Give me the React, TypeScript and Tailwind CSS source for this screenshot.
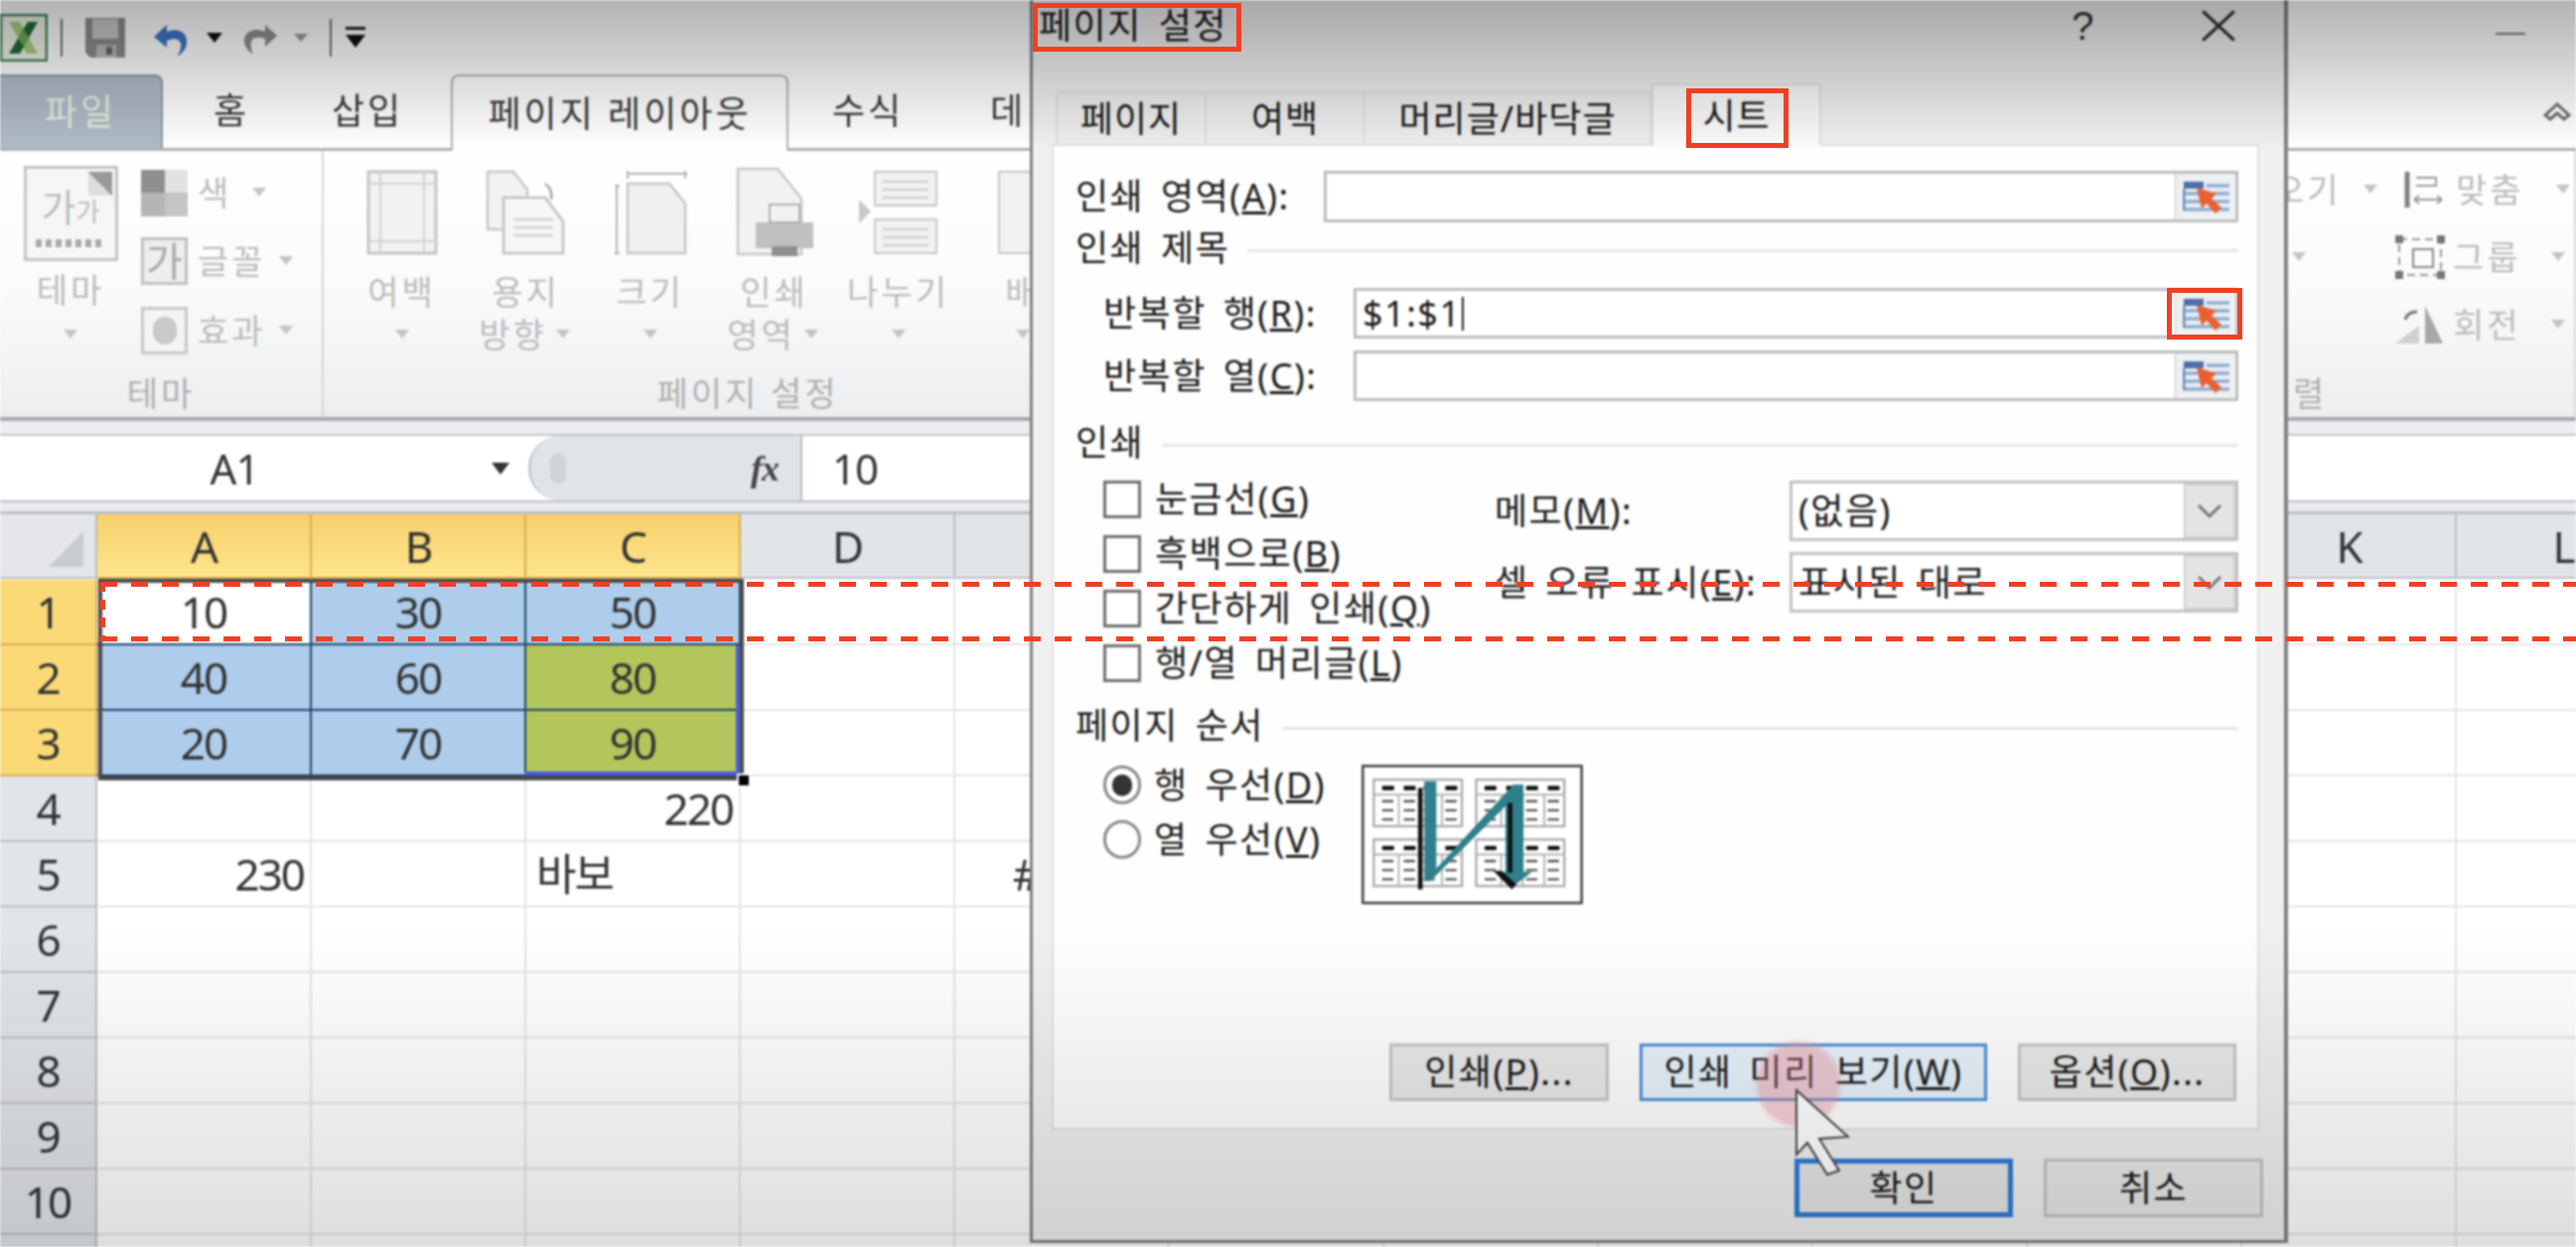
import React from "react";

const GRID_COLS = ["A", "B", "C", "D", "E", "F", "G", "H", "I", "J", "K", "L"];
const BLUE = "bg-[#aecdec]";
const GREEN = "bg-[#b3c65c]";

const Arrow = ({ className = "" }: { className?: string }) => (
  <svg width="20" height="12" viewBox="0 0 20 12" className={className}>
    <path d="M3 1h14l-7 9z" fill="#c4c4c4" />
  </svg>
);

const ExcelLogo = () => (
  <svg width="48" height="48" viewBox="0 0 48 48" className="ml-0 shrink-0">
    <rect x="1" y="1" width="46" height="46" fill="#eef3ea" stroke="#3d7d4c" strokeWidth="2.5" />
    <path d="M9 8h11l18 32H27z" fill="#a9cf7d" />
    <path d="M38 8H28L9 40h11z" fill="#1f6d36" />
    <path d="M18 24l6-8 5 8-5 9z" fill="#76a85f" />
  </svg>
);

const QuickAccess = () => (
  <div className="flex items-center h-[75px] shrink-0">
    <ExcelLogo />
    <div className="w-[2px] h-[38px] bg-[#707070] ml-[13px]" />
    <svg width="42" height="42" viewBox="0 0 42 42" className="ml-[22px]">
      <path d="M1 1h40v40H6l-5-5z" fill="#8c8c8c" />
      <rect x="8" y="2" width="26" height="20" fill="#c9c9c9" />
      <rect x="12" y="28" width="20" height="13" fill="#bbb" />
      <rect x="22" y="30" width="6" height="8" fill="#666" />
    </svg>
    <svg width="38" height="40" viewBox="0 0 38 40" className="ml-[26px]">
      <path d="M2 19l13-12v7c12-5 21 1 20 12-1 6-5 10-10 13 3-5 5-9 4-13-1-5-6-6-14-3v7z" fill="#3f75c9" />
    </svg>
    <svg width="18" height="12" viewBox="0 0 18 12" className="ml-[16px]">
      <path d="M1 1h16l-8 10z" fill="#111" />
    </svg>
    <svg width="38" height="38" viewBox="0 0 38 38" className="ml-[18px]">
      <path d="M36 17L24 6v7C12 8 3 13 3 22c0 6 4 10 9 14-2-5-3-9-2-13 2-5 7-5 14-3v8z" fill="#8f8f8f" />
    </svg>
    <svg width="16" height="10" viewBox="0 0 16 10" className="ml-[14px]">
      <path d="M1 1h14l-7 8z" fill="#9a9a9a" />
    </svg>
    <div className="w-[2px] h-[38px] bg-[#707070] ml-[21px]" />
    <svg width="22" height="24" viewBox="0 0 22 24" className="ml-[13px]">
      <rect x="1" y="1" width="20" height="3" fill="#222" />
      <path d="M1 9h20l-10 13z" fill="#111" />
    </svg>
  </div>
);

const MenuTabs = () => (
  <div className="flex items-stretch h-[77px] shrink-0 text-[36px] tracking-[3px] text-[#3b3b3b] border-b-[3px] border-[#b0b0b0]">
    <div className="w-[164px] flex items-center justify-center bg-[#b0bbc8] border-t-[2px] border-r-[2px] border-[#8d96a2] rounded-tr-[8px] text-[#e6efdc]">
      파일
    </div>
    <div className="w-[138px] flex items-center justify-center">홈</div>
    <div className="w-[136px] flex items-center justify-center">삽입</div>
    <div className="w-[16px]" />
    <div className="w-[340px] flex items-center justify-center bg-white border-[2px] border-b-0 border-[#b4b4b4] rounded-t-[8px] -mb-[3px] relative">
      페이지 레이아웃
    </div>
    <div className="w-[160px] flex items-center justify-center">수식</div>
    <div className="w-[122px] flex items-center justify-center">데</div>
    <div className="flex-1 flex justify-end items-center pr-[4px]">
      <svg width="30" height="24" viewBox="0 0 30 24">
        <path d="M3 16l12-11 12 11-5 4-7-6-7 6z" fill="none" stroke="#6e6e6e" strokeWidth="3" />
      </svg>
    </div>
  </div>
);

const RibbonButton = ({
  label,
  second,
  children,
}: {
  label: string;
  second?: string;
  children: React.ReactNode;
}) => (
  <div className="w-[125px] shrink-0 flex flex-col items-center leading-none">
    <div className="h-[86px] mt-[19px] flex items-center justify-center">{children}</div>
    <div className="h-[43px] mt-[15px] flex items-center justify-center whitespace-nowrap">{label}</div>
    <div className="h-[44px] flex items-center justify-center gap-[6px] whitespace-nowrap">
      {second}
      <Arrow />
    </div>
  </div>
);

const Ribbon = () => (
  <div className="flex h-[272px] shrink-0 bg-gradient-to-b from-white via-[#fbfbfb] to-[#eceef0] text-[34px] tracking-[3px] text-[#bcbcbc] border-b-[4px] border-[#a9a9a9]">
    {/* theme group */}
    <div className="w-[326px] shrink-0 border-r-[2px] border-[#d6d6d6] flex flex-col">
      <div className="flex h-[222px]">
        <div className="w-[142px] flex flex-col items-center">
          <div className="mt-[15px] w-[95px] h-[96px] border-[3px] border-[#c4c4c4] bg-[#f6f6f6] relative flex flex-col items-center justify-center text-[#bdbdbd]">
            <span className="text-[38px] tracking-[0px] leading-[52px]">가<span className="text-[26px]">가</span></span>
            <div className="w-[70px] h-[8px] mt-[2px] bg-[repeating-linear-gradient(90deg,#aaa_0,#aaa_6px,transparent_6px,transparent_10px)]" />
            <div className="absolute top-[3px] right-[3px] w-[24px] h-[24px] bg-[linear-gradient(45deg,#ddd_50%,#999_50%)]" />
          </div>
          <div className="h-[43px] mt-[8px] flex items-center">테마</div>
          <Arrow className="mt-[17px]" />
        </div>
        <div className="flex-1 flex flex-col pt-[19px] gap-[22px]">
          <div className="flex items-center h-[46px] gap-[10px]">
            <div className="w-[47px] h-[47px] grid grid-cols-2 grid-rows-2">
              <div className="bg-[#8f8f8f]" />
              <div className="bg-[#e2e2e2]" />
              <div className="bg-[#b5b5b5]" />
              <div className="bg-[#c4c4c4]" />
            </div>
            <span>색</span>
            <Arrow className="ml-[8px]" />
          </div>
          <div className="flex items-center h-[48px] gap-[10px]">
            <div className="w-[47px] h-[48px] border-[3px] border-[#c0c0c0] bg-[#eee] flex items-center justify-center text-[#aaa] text-[40px] tracking-normal">가</div>
            <span>글꼴</span>
            <Arrow />
          </div>
          <div className="flex items-center h-[48px] gap-[10px]">
            <div className="w-[47px] h-[48px] border-[3px] border-[#c8c8c8] bg-[#f4f4f4] flex items-center justify-center">
              <div className="w-[24px] h-[28px] rounded-full bg-[#c9c9c9]" />
            </div>
            <span>효과</span>
            <Arrow />
          </div>
        </div>
      </div>
      <div className="flex-1 flex items-start justify-center pt-[4px] text-[#b0b0b0] leading-[36px]">테마</div>
    </div>

    {/* page setup group */}
    <div className="w-[854px] shrink-0 flex flex-col">
      <div className="flex h-[222px] pl-[16px]">
        <RibbonButton label="여백">
          <svg width="72" height="86" viewBox="0 0 72 86">
            <rect x="2" y="2" width="68" height="82" fill="#f2f2f2" stroke="#c4c4c4" strokeWidth="3" />
            <path d="M14 2v82M58 2v82M2 14h68M2 72h68" stroke="#d2d2d2" strokeWidth="2" fill="none" />
          </svg>
        </RibbonButton>
        <RibbonButton label="용지" second="방향">
          <svg width="82" height="86" viewBox="0 0 82 86">
            <path d="M2 2h26l14 18v40H2z" fill="#f2f2f2" stroke="#c8c8c8" strokeWidth="2.5" />
            <path d="M18 28h42l18 24v32H18z" fill="#f6f6f6" stroke="#c2c2c2" strokeWidth="2.5" />
            <path d="M28 50h40M28 58h40M28 66h40" stroke="#d4d4d4" strokeWidth="2.5" />
            <path d="M60 14q8 6 6 16" stroke="#aaa" strokeWidth="2.5" fill="none" />
          </svg>
        </RibbonButton>
        <RibbonButton label="크기">
          <svg width="74" height="86" viewBox="0 0 74 86">
            <path d="M14 4h60M14 1v8M72 1v8M3 16v68M1 16h5M1 84h5" stroke="#b4b4b4" strokeWidth="2" fill="none" />
            <path d="M14 14h42l16 20v50H14z" fill="#f0f0f0" stroke="#c6c6c6" strokeWidth="2.5" />
          </svg>
        </RibbonButton>
        <RibbonButton label="인쇄" second="영역">
          <svg width="78" height="92" viewBox="0 0 78 92">
            <path d="M2 2h40l24 30v56H2z" fill="#f2f2f2" stroke="#c8c8c8" strokeWidth="2.5" />
            <rect x="20" y="56" width="58" height="26" fill="#c0c0c0" />
            <rect x="34" y="38" width="30" height="18" fill="#f2f2f2" stroke="#b0b0b0" strokeWidth="2" />
            <rect x="36" y="80" width="26" height="10" fill="#8f8f8f" />
          </svg>
        </RibbonButton>
        <RibbonButton label="나누기">
          <svg width="80" height="86" viewBox="0 0 80 86">
            <path d="M0 30l12 12-12 12z" fill="#c8c8c8" />
            <rect x="16" y="2" width="62" height="34" fill="#f2f2f2" stroke="#c8c8c8" strokeWidth="2" />
            <rect x="16" y="50" width="62" height="34" fill="#f2f2f2" stroke="#c8c8c8" strokeWidth="2" />
            <path d="M24 12h46M24 20h46M24 28h46M24 60h46M24 68h46M24 76h46" stroke="#d0d0d0" strokeWidth="2.5" />
          </svg>
        </RibbonButton>
        <RibbonButton label="배">
          <svg width="52" height="86" viewBox="0 0 52 86">
            <rect x="2" y="2" width="50" height="82" fill="#f2f2f2" stroke="#c8c8c8" strokeWidth="2" />
          </svg>
        </RibbonButton>
      </div>
      <div className="flex-1 flex items-start justify-center pt-[4px] text-[#b0b0b0] leading-[36px]">페이지 설정</div>
    </div>

    {/* arrange group, the part to the right of the dialog */}
    <div className="ml-auto w-[291px] shrink-0 flex flex-col border-r-[2px] border-[#d6d6d6]">
      <div className="h-[222px] pt-[19px] flex flex-col gap-[28px]">
        <div className="flex items-center h-[40px] whitespace-nowrap">
          <span className="w-[62px] -ml-[14px]">오기</span>
          <Arrow className="ml-[26px]" />
          <svg width="40" height="36" viewBox="0 0 40 36" className="ml-[24px]">
            <path d="M3 0v36" stroke="#808080" strokeWidth="5" />
            <path d="M12 6h20v8H12M10 28h28M10 28l5-4M10 28l5 4M38 28l-5-4M38 28l-5 4" stroke="#999" strokeWidth="2" fill="none" />
          </svg>
          <span className="ml-[12px] w-[92px]">맞춤</span>
          <Arrow className="ml-[6px]" />
        </div>
        <div className="flex items-center h-[40px] whitespace-nowrap">
          <Arrow className="ml-[2px]" />
          <svg width="50" height="44" viewBox="0 0 50 44" className="ml-[87px]">
            <path d="M4 4h42v36H4z" fill="none" stroke="#999" strokeWidth="2" strokeDasharray="8 5" />
            <rect x="18" y="14" width="20" height="18" fill="none" stroke="#888" strokeWidth="2" />
            <path d="M0 0h8v8H0zM42 0h8v8h-8zM0 36h8v8H0zM42 36h8v8h-8z" fill="#777" />
          </svg>
          <span className="ml-[8px] w-[92px]">그룹</span>
          <Arrow className="ml-[4px]" />
        </div>
        <div className="flex items-center h-[40px] pl-[109px] whitespace-nowrap">
          <svg width="48" height="38" viewBox="0 0 48 38">
            <path d="M0 38l24-18v18z" fill="#d0d0d0" />
            <path d="M30 0v38h18z" fill="#a8a8a8" />
            <path d="M10 14q2-8 12-8" stroke="#777" strokeWidth="3" fill="none" />
          </svg>
          <span className="ml-[10px] w-[92px]">회전</span>
          <Arrow className="ml-[4px]" />
        </div>
      </div>
      <div className="flex-1 pl-[6px] pt-[4px] text-[#b0b0b0] leading-[36px]">렬</div>
    </div>
  </div>
);

const FormulaBar = () => (
  <div className="flex flex-col shrink-0">
    <div className="h-[13px] bg-[#eceef1]" />
    <div className="h-[67px] flex bg-white text-[42px] tracking-[-1px] text-[#333] border-t-[2px] border-[#c4c4c4]">
      <div className="w-[472px] flex items-center justify-center">A1</div>
      <div className="w-[60px] flex items-center justify-start pl-[22px]">
        <svg width="20" height="14" viewBox="0 0 20 14">
          <path d="M1 1h18l-9 12z" fill="#333" />
        </svg>
      </div>
      <div className="w-[276px] flex items-center justify-between pl-[20px] pr-[22px] bg-[#e0e3e8] border-l-[2px] border-r-[2px] border-[#b9bcc1] rounded-l-[40px]">
        <div className="w-[16px] h-[30px] rounded-full bg-[#cfd2d7]" />
        <span className="font-['Liberation_Serif',serif] italic font-bold text-[36px] text-[#444]">fx</span>
      </div>
      <div className="flex-1 flex items-center pl-[30px]">10</div>
    </div>
    <div className="h-[14px] bg-[#e9ebee] border-b-[3px] border-t-[2px] border-[#bcbfc4]" />
  </div>
);

const cellData: Record<string, { text: string; bg?: string; align?: string }> = {
  A1: { text: "10", align: "justify-center" },
  B1: { text: "30", bg: BLUE, align: "justify-center" },
  C1: { text: "50", bg: BLUE, align: "justify-center" },
  A2: { text: "40", bg: BLUE, align: "justify-center" },
  B2: { text: "60", bg: BLUE, align: "justify-center" },
  C2: { text: "80", bg: GREEN, align: "justify-center" },
  A3: { text: "20", bg: BLUE, align: "justify-center" },
  B3: { text: "70", bg: BLUE, align: "justify-center" },
  C3: { text: "90", bg: GREEN, align: "justify-center" },
  C4: { text: "220", align: "justify-end pr-[6px]" },
  A5: { text: "230", align: "justify-end pr-[6px]" },
  C5: { text: "바보", align: "justify-start pl-[10px]" },
  E5: { text: "#N/A", align: "justify-center" },
};

const Grid = () => (
  <div className="relative flex-1 overflow-hidden text-[44px] tracking-[-2px] text-[#333]">
    <div className="grid grid-cols-[98px_repeat(12,216px)] auto-rows-[66px] -mb-[2px]">
      {/* column header */}
      <div className="h-[65px] bg-[#e4e6ea] border-r-[2px] border-b-[2px] border-[#b8bbc0] flex items-end justify-end pr-[12px] pb-[10px]">
        <div className="w-[36px] h-[36px] bg-[linear-gradient(135deg,transparent_50%,#c9ccd1_50%)]" />
      </div>
      {GRID_COLS.map((c, i) => (
        <div
          key={c}
          className={
            i < 3
              ? "h-[65px] flex items-center justify-center bg-gradient-to-b from-[#f8d06b] to-[#fde58c] border-r-[2px] border-b-[2px] border-[#d6ae53]"
              : "h-[65px] flex items-center justify-center bg-[#e1e4e9] border-r-[2px] border-b-[2px] border-[#bcbfc4]"
          }
        >
          {c}
        </div>
      ))}
      {/* rows */}
      {[1, 2, 3, 4, 5, 6, 7, 8, 9, 10, 11].map((r) => (
        <React.Fragment key={r}>
          <div
            className={
              r < 4
                ? "flex items-center justify-center bg-[#fbd977] border-r-[2px] border-b-[2px] border-[#d6ae53]"
                : "flex items-center justify-center bg-[#e1e4e9] border-r-[2px] border-b-[2px] border-[#bcbfc4]"
            }
          >
            {r < 11 ? r : null}
          </div>
          {GRID_COLS.map((c) => {
            const cell = cellData[c + r];
            const inSelection = r < 4 && (c === "A" || c === "B" || c === "C");
            return (
              <div
                key={c + r}
                className={`flex items-center border-r-[2px] border-b-[2px] ${inSelection ? "border-[#1d4468]" : "border-[#e4e4e4]"} ${cell?.bg ?? ""} ${cell?.align ?? ""}`}
              >
                {cell?.text}
              </div>
            );
          })}
        </React.Fragment>
      ))}
    </div>
    {/* selection frame */}
    <div className="absolute left-[99px] top-[65px] w-[650px] h-[203px] border-[4px] border-[#4a4a4a] pointer-events-none" />
    <div className="absolute left-[528px] top-[259px] w-[217px] h-[4px] bg-[#4a5de0]" />
    <div className="absolute left-[741px] top-[132px] w-[4px] h-[130px] bg-[#4a5de0]" />
    <div className="absolute left-[742px] top-[261px] w-[14px] h-[14px] bg-black border-[2px] border-white" />
  </div>
);

const RefIcon = () => (
  <svg width="48" height="36" viewBox="0 0 48 36">
    <rect x="1" y="2" width="46" height="32" fill="#e6ecf5" />
    <rect x="1" y="3" width="20" height="7" fill="#4f6fa8" />
    <path d="M24 7h23M1 15h46M1 23h46M1 31h46" stroke="#8aa5cc" strokeWidth="3" />
    <path d="M1 10v22" stroke="#6f8cba" strokeWidth="3" />
    <path d="M14 9l20 6-5 5 10 9-6 6-9-10-5 5z" fill="#e8602f" />
  </svg>
);

const RefField = ({ value }: { value?: string }) => (
  <div className="flex flex-1 self-stretch border-[3px] border-[#bdbdbd] bg-white">
    <div className="flex-1 flex items-center pl-[6px]">
      {value}
      {value && <div className="w-[2px] h-[34px] bg-[#222]" />}
    </div>
    <div className="w-[62px] shrink-0 bg-[#eef0f2] border-l-[3px] border-[#e4e4e4] flex items-center justify-center">
      <RefIcon />
    </div>
  </div>
);

const Legend = ({ label, className = "" }: { label: string; className?: string }) => (
  <div className={`flex items-center h-[40px] gap-[18px] ${className}`}>
    <span>{label}</span>
    <div className="flex-1 h-[3px] bg-[#e6e6e6] mt-[4px]" />
  </div>
);

const Check = ({ children }: { children: React.ReactNode }) => (
  <div className="flex items-center h-[38px] gap-[14px]">
    <div className="w-[38px] h-[38px] border-[3px] border-[#6f6f6f] bg-white" />
    <span>{children}</span>
  </div>
);

const Combo = ({ value }: { value: string }) => (
  <div className="flex h-[61px] w-[452px] border-[3px] border-[#c2c2c2] bg-white">
    <div className="flex-1 flex items-center pl-[6px]">{value}</div>
    <div className="w-[52px] bg-[#e4e4e4] border-[2px] border-[#d0d0d0] flex items-center justify-center">
      <svg width="26" height="16" viewBox="0 0 26 16">
        <path d="M2 2l11 11L24 2" fill="none" stroke="#777" strokeWidth="3" />
      </svg>
    </div>
  </div>
);

const Radio = ({ on, children }: { on?: boolean; children: React.ReactNode }) => (
  <div className="flex items-center h-[39px] gap-[13px]">
    <div className="w-[38px] h-[39px] rounded-full border-[3px] border-[#8a8a8a] bg-white flex items-center justify-center">
      {on && <div className="w-[20px] h-[22px] rounded-full bg-[#333]" />}
    </div>
    <span>{children}</span>
  </div>
);

const PageOrderPreview = () => {
  const minis = [
    [70, 70],
    [378, 70],
    [70, 250],
    [378, 250],
  ];
  return (
    <svg width="223" height="141" viewBox="33 25 666 420" className="bg-white">
      <rect x="37" y="29" width="658" height="412" fill="#fff" stroke="#333" strokeWidth="7" />
      {minis.map(([x, y]) => (
        <g key={`${x}-${y}`}>
          <rect x={x} y={y} width="265" height="140" fill="#fff" stroke="#aaa" strokeWidth="7" />
          <path d={`M${x} ${y + 45}h265M${x + 75} ${y + 45}v95M${x + 140} ${y + 45}v95M${x + 205} ${y + 45}v95`} stroke="#aaa" strokeWidth="5" />
          {[25, 90, 150, 215].map((dx) => (
            <rect key={dx} x={x + dx} y={y + 19} width="36" height="13" rx="3" fill="#111" />
          ))}
          {[25, 90, 150, 215].map((dx) => (
            <path key={dx} d={`M${x + dx} ${y + 65}h34M${x + dx} ${y + 92}h34M${x + dx} ${y + 120}h34`} stroke="#555" strokeWidth="7" />
          ))}
        </g>
      ))}
      <path d="M210 95v305" stroke="#111" strokeWidth="14" />
      <path d="M222 75h36v262L490 85h30v262h26l-56 44-50-44h26V150L240 375h-18z" fill="#2f7f8c" />
      <path d="M480 140v210" stroke="#111" strokeWidth="14" />
      <path d="M430 345l55 55 14-15-45-40z" fill="#111" />
    </svg>
  );
};

const DialogButton = ({ children, variant }: { children: React.ReactNode; variant?: "hover" | "default" }) => {
  let cls = "border-[3px] border-[#c4c4c4] bg-[#e8e8e8]";
  if (variant === "hover") cls = "border-[3px] border-[#4a90d9] bg-[#e6f2fb]";
  if (variant === "default") cls = "border-[5px] border-[#2e7bd6] bg-[#e6e6e6]";
  return <div className={`flex items-center justify-center h-full ${cls}`}>{children}</div>;
};

const PageSetupDialog = () => (
  <div className="absolute left-[1037px] top-0 w-[1267px] h-[1252px] flex flex-col bg-[#f0f0f0] border-l-[3px] border-r-[4px] border-b-[3px] border-[#808080] text-[36px] tracking-[1.5px] [word-spacing:6px] text-[#1a1a1a] leading-none">
    {/* title bar */}
    <div className="h-[65px] shrink-0 flex items-center pl-[6px] pb-[14px]">
      <span className="flex-1">페이지 설정</span>
      <span className="mr-[106px] text-[40px] text-[#333] font-['Liberation_Sans',sans-serif]">?</span>
      <svg width="36" height="36" viewBox="0 0 32 32" className="mr-[48px]">
        <path d="M2 3l28 26M30 3L2 29" stroke="#333" strokeWidth="3" />
      </svg>
    </div>

    {/* sheet tabs */}
    <div className="h-[80px] shrink-0 flex items-end pl-[23px] tracking-[1px]">
      <div className="w-[152px] h-[53px] flex items-center justify-center bg-[#eeeeee] border-[2px] border-b-0 border-[#e0e0e0]">페이지</div>
      <div className="w-[160px] h-[53px] flex items-center justify-center bg-[#eeeeee] border-t-[2px] border-r-[2px] border-[#e0e0e0]">여백</div>
      <div className="w-[288px] h-[53px] flex items-center justify-center bg-[#eeeeee] border-t-[2px] border-r-[2px] border-[#e0e0e0]">머리글/바닥글</div>
      <div className="w-[171px] h-[63px] flex items-center justify-center bg-[#fafafa] border-[2px] border-b-0 border-[#e0e0e0] -mb-[2px] relative">시트</div>
    </div>

    {/* sheet panel */}
    <div className="ml-[19px] w-[1216px] h-[993px] shrink-0 flex flex-col bg-[#fefefe] border-[2px] border-[#e0e0e0] pl-[22px] pr-[19px]">
      <div className="flex items-center h-[52px] mt-[25px]">
        <span className="w-[250px] shrink-0">인쇄 영역(<u>A</u>):</span>
        <RefField />
      </div>
      <Legend label="인쇄 제목" className="mt-[6px]" />
      <div className="flex items-center h-[51px] mt-[20px] pl-[28px]">
        <span className="w-[252px] shrink-0">반복할 행(<u>R</u>):</span>
        <RefField value="$1:$1" />
      </div>
      <div className="flex items-center h-[51px] mt-[12px] pl-[28px]">
        <span className="w-[252px] shrink-0">반복할 열(<u>C</u>):</span>
        <RefField />
      </div>
      <Legend label="인쇄" className="mt-[22px]" />
      <div className="flex mt-[18px]">
        <div className="w-[422px] shrink-0 pl-[28px] flex flex-col gap-[17px]">
          <Check>눈금선(<u>G</u>)</Check>
          <Check>흑백으로(<u>B</u>)</Check>
          <Check>간단하게 인쇄(<u>Q</u>)</Check>
          <Check>행/열 머리글(<u>L</u>)</Check>
        </div>
        <div className="flex-1 flex flex-col gap-[11px]">
          <div className="flex items-center">
            <span className="w-[297px] shrink-0">메모(<u>M</u>):</span>
            <Combo value="(없음)" />
          </div>
          <div className="flex items-center">
            <span className="w-[297px] shrink-0">셀 오류 표시(<u>E</u>):</span>
            <Combo value="표시된 대로" />
          </div>
        </div>
      </div>
      <Legend label="페이지 순서" className="mt-[24px]" />
      <div className="flex mt-[19px] pl-[28px]">
        <div className="w-[260px] shrink-0 flex flex-col gap-[16px] pt-[1px]">
          <Radio on>행 우선(<u>D</u>)</Radio>
          <Radio>열 우선(<u>V</u>)</Radio>
        </div>
        <PageOrderPreview />
      </div>
      <div className="mt-auto mb-[27px] flex justify-end gap-[31px] h-[58px] pr-[2px]">
        <div className="w-[221px]"><DialogButton>인쇄(<u>P</u>)...</DialogButton></div>
        <div className="w-[350px]"><DialogButton variant="hover">인쇄 미리 보기(<u>W</u>)</DialogButton></div>
        <div className="w-[220px]"><DialogButton>옵션(<u>O</u>)...</DialogButton></div>
      </div>
    </div>

    {/* ok / cancel */}
    <div className="flex justify-end gap-[31px] h-[59px] mt-[29px] pr-[21px]">
      <div className="w-[220px]"><DialogButton variant="default">확인</DialogButton></div>
      <div className="w-[221px]"><DialogButton>취소</DialogButton></div>
    </div>
  </div>
);

export default function App() {
  return (
    <div className="relative w-[2594px] h-[1256px] overflow-hidden bg-white font-['Noto_Sans','Noto_Sans_CJK_KR',sans-serif]">
      <div className="absolute inset-0 blur-[0.8px]">
        <div className="flex flex-col h-full">
          <QuickAccess />
          <MenuTabs />
          <Ribbon />
          <FormulaBar />
          <Grid />
        </div>

        {/* minimize */}
        <div className="absolute left-[2513px] top-[33px] w-[30px] h-[2px] bg-[#777]" />

        <PageSetupDialog />

        {/* click highlight and mouse cursor */}
        <div className="absolute left-[1769px] top-[1049px] w-[84px] h-[86px] rounded-full bg-[#f08a96]/40 blur-[2px]" />
        <svg width="56" height="90" viewBox="-2 -2 56 90" className="absolute left-[1807px] top-[1096px]">
          <path d="M0 0L52 47 23 49 43 81 31 85 11 53 0 65z" fill="#fff" stroke="#444" strokeWidth="2" />
        </svg>

        {/* video vignette */}
        <div className="absolute left-0 right-0 top-0 h-[150px] bg-gradient-to-b from-black/30 to-transparent pointer-events-none" />
        <div className="absolute left-0 right-0 bottom-0 h-[320px] bg-gradient-to-b from-transparent to-black/13 pointer-events-none" />
      </div>

      {/* red annotations */}
      <div className="absolute left-[1040px] top-[3px] w-[210px] h-[49px] border-[5px] border-[#ef4023]" />
      <div className="absolute left-[1698px] top-[89px] w-[103px] h-[60px] border-[5px] border-[#ef4023]" />
      <div className="absolute left-[2182px] top-[290px] w-[76px] h-[52px] border-[5px] border-[#ef4023]" />
      <div className="absolute left-[101px] top-[586px] right-0 h-[5px] bg-[repeating-linear-gradient(90deg,#ef4023_0,#ef4023_17px,transparent_17px,transparent_31px)]" />
      <div className="absolute left-[101px] top-[641px] right-0 h-[5px] bg-[repeating-linear-gradient(90deg,#ef4023_0,#ef4023_17px,transparent_17px,transparent_31px)]" />
      <div className="absolute left-[101px] top-[586px] w-[5px] h-[60px] bg-[repeating-linear-gradient(180deg,#ef4023_0,#ef4023_10px,transparent_10px,transparent_18px)]" />
    </div>
  );
}
